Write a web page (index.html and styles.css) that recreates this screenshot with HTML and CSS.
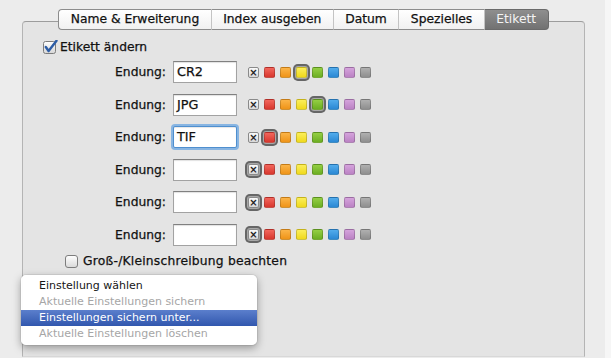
FILE: index.html
```html
<!DOCTYPE html>
<html lang="de">
<head>
<meta charset="utf-8">
<link rel="stylesheet" href="styles.css">
</head>
<body>
<div class="window">
  <div class="tabs">
    <div class="tab first">Name &amp; Erweiterung</div>
    <div class="tab">Index ausgeben</div>
    <div class="tab">Datum</div>
    <div class="tab">Spezielles</div>
    <div class="tab selected last">Etikett</div>
  </div>
  <div class="panel">
    <label class="check check-main">
      <svg class="box" width="15" height="14" viewBox="0 0 15 14">
        <defs><linearGradient id="cg" x1="0" y1="0" x2="0" y2="1"><stop offset="0" stop-color="#ffffff"/><stop offset="1" stop-color="#d6d6d6"/></linearGradient></defs>
        <rect x="0.5" y="1.5" width="12" height="12" rx="2" fill="url(#cg)" stroke="#7d7d7d"/>
        <path d="M2.8 7 L5.6 11 L13.5 0.8" fill="none" stroke="#2d5da6" stroke-width="2.4" stroke-linecap="round" stroke-linejoin="round"/>
      </svg>
      <span>Etikett ändern</span>
    </label>

    <div class="rows">
      <div class="row">
        <span class="label">Endung:</span><span class="field">CR2</span>
        <div class="swatches"><span class="sw none">×</span><span class="sw red"></span><span class="sw orange"></span><span class="sw yellow sel"></span><span class="sw green"></span><span class="sw blue"></span><span class="sw purple"></span><span class="sw gray"></span></div>
      </div>
      <div class="row">
        <span class="label">Endung:</span><span class="field">JPG</span>
        <div class="swatches"><span class="sw none">×</span><span class="sw red"></span><span class="sw orange"></span><span class="sw yellow"></span><span class="sw green sel"></span><span class="sw blue"></span><span class="sw purple"></span><span class="sw gray"></span></div>
      </div>
      <div class="row">
        <span class="label">Endung:</span><span class="field focus">TIF</span>
        <div class="swatches"><span class="sw none">×</span><span class="sw red sel"></span><span class="sw orange"></span><span class="sw yellow"></span><span class="sw green"></span><span class="sw blue"></span><span class="sw purple"></span><span class="sw gray"></span></div>
      </div>
      <div class="row">
        <span class="label">Endung:</span><span class="field"></span>
        <div class="swatches"><span class="sw none sel">×</span><span class="sw red"></span><span class="sw orange"></span><span class="sw yellow"></span><span class="sw green"></span><span class="sw blue"></span><span class="sw purple"></span><span class="sw gray"></span></div>
      </div>
      <div class="row">
        <span class="label">Endung:</span><span class="field"></span>
        <div class="swatches"><span class="sw none sel">×</span><span class="sw red"></span><span class="sw orange"></span><span class="sw yellow"></span><span class="sw green"></span><span class="sw blue"></span><span class="sw purple"></span><span class="sw gray"></span></div>
      </div>
      <div class="row">
        <span class="label">Endung:</span><span class="field"></span>
        <div class="swatches"><span class="sw none sel">×</span><span class="sw red"></span><span class="sw orange"></span><span class="sw yellow"></span><span class="sw green"></span><span class="sw blue"></span><span class="sw purple"></span><span class="sw gray"></span></div>
      </div>
    </div>

    <label class="check check-case">
      <svg class="box" width="13" height="13" viewBox="0 0 13 13">
        <defs><linearGradient id="cg2" x1="0" y1="0" x2="0" y2="1"><stop offset="0" stop-color="#ffffff"/><stop offset="1" stop-color="#d9d9d9"/></linearGradient></defs>
        <rect x="0.5" y="0.5" width="12" height="12" rx="2.5" fill="url(#cg2)" stroke="#7d7d7d"/>
      </svg>
      <span>Groß-/Kleinschreibung beachten</span>
    </label>
  </div>
</div>

<div class="menu">
  <div class="item">Einstellung wählen</div>
  <div class="item disabled">Aktuelle Einstellungen sichern</div>
  <div class="item active">Einstellungen sichern unter...</div>
  <div class="item disabled">Aktuelle Einstellungen löschen</div>
</div>
</body>
</html>
```

FILE: styles.css
```css
html, body {
  margin: 0;
  padding: 0;
}
body {
  width: 611px;
  height: 358px;
  overflow: hidden;
  background: #f6f6f6;
  font-family: "DejaVu Sans", "Liberation Sans", sans-serif;
  font-size: 12.3px;
  color: #111;
  position: relative;
}
.window {
  width: 605px;
  height: 358px;
  background: #ececec;
  padding: 9px 20px 0 22px;
  box-sizing: border-box;
  -webkit-text-stroke: 0.25px currentColor;
}
.tabs {
  display: flex;
  justify-content: center;
  position: relative;
  z-index: 1;
  height: 21px;
}
.tab {
  height: 21px;
  box-sizing: border-box;
  line-height: 19px;
  padding: 0 11.5px;
  background: linear-gradient(#ffffff, #f1f1f1);
  border-top: 1px solid #8c8c8c;
  border-bottom: 1px solid #8c8c8c;
  border-right: 1px solid #c4c4c4;
  white-space: nowrap;
}
.tab.first {
  border-left: 1px solid #8c8c8c;
  border-radius: 4px 0 0 4px;
}
.tab.last {
  border-right: 1px solid #6a6a6a;
  border-radius: 0 4px 4px 0;
}
.tab.selected {
  background: linear-gradient(#8e8e8e, #727272);
  border-color: #6a6a6a;
  color: #f4f4f4;
  -webkit-text-stroke: 0;
}
.panel {
  margin-top: -9px;
  height: 336px;
  border: 1px solid #b4b4b4;
  border-top-color: #9c9c9c;
  border-bottom-color: #d8d8d8;
  border-radius: 4px 4px 0 0;
  background: #e4e4e4;
  padding-top: 18px;
  box-sizing: border-box;
}
.check {
  display: flex;
  align-items: center;
  height: 14px;
  white-space: nowrap;
}
.check .box {
  flex: none;
}
.check-main {
  padding-left: 20px;
  gap: 2px;
}
.check-case {
  padding-left: 42px;
  gap: 5px;
  margin-top: 8.5px;
  letter-spacing: 0.2px;
}
.rows {
  margin-top: 7px;
  display: flex;
  flex-direction: column;
  gap: 10.5px;
}
.row {
  display: flex;
  align-items: center;
  height: 22px;
}
.label {
  width: 143px;
  text-align: right;
  margin-right: 7px;
}
.field {
  width: 64px;
  height: 22px;
  box-sizing: border-box;
  background: #fff;
  border: 1px solid #a2a2a2;
  border-top-color: #808080;
  box-shadow: inset 0 1px 1px rgba(0, 0, 0, 0.12);
  padding-left: 3px;
  line-height: 20px;
  font-size: 12.8px;
  margin-right: 11px;
}
.field.focus {
  border-color: #4f8fcf;
  border-radius: 2px;
  box-shadow: 0 0 0 2px rgba(105, 165, 225, 0.75), inset 0 1px 1px rgba(0, 0, 0, 0.1);
}
.swatches {
  display: flex;
  gap: 5px;
  -webkit-text-stroke: 0;
}
.sw {
  width: 11px;
  height: 11px;
  box-sizing: border-box;
  border-radius: 2px;
  border: 1px solid rgba(0, 0, 0, 0.18);
}
.sw.sel {
  box-shadow: 0 0 0 1px #a8a8a8, 0 0 0 3px #666666;
  border-radius: 2px;
}
.sw.none {
  background: linear-gradient(#fafafa, #d8d8d8);
  border: 1px solid #8a8a8a;
  font-size: 10px;
  font-weight: bold;
  line-height: 9px;
  text-align: center;
  color: #222;
}
.red { background: linear-gradient(#f2665c, #d8372e); }
.orange { background: linear-gradient(#fbb448, #ef9418); }
.yellow { background: linear-gradient(#fbee5a, #f0d91c); }
.green { background: linear-gradient(#94cf43, #6cae23); }
.blue { background: linear-gradient(#52acec, #2b88d4); }
.purple { background: linear-gradient(#d5a3dc, #bb82c4); }
.gray { background: linear-gradient(#b0b0b0, #8e8e8e); }

.menu {
  position: absolute;
  left: 21px;
  top: 275px;
  width: 236px;
  padding: 3px 0;
  background: rgba(255, 255, 255, 0.97);
  border-radius: 5px;
  box-shadow: 0 3px 9px rgba(0, 0, 0, 0.35), 0 0 0 1px rgba(0, 0, 0, 0.06);
  font-size: 11px;
  z-index: 5;
}
.item {
  height: 16px;
  line-height: 16px;
  padding-left: 18px;
  color: #151515;
  white-space: nowrap;
}
.item.disabled {
  color: #a6a6a6;
}
.item.active {
  background: linear-gradient(#5b7fcc, #3157ae);
  color: #fff;
}
```
